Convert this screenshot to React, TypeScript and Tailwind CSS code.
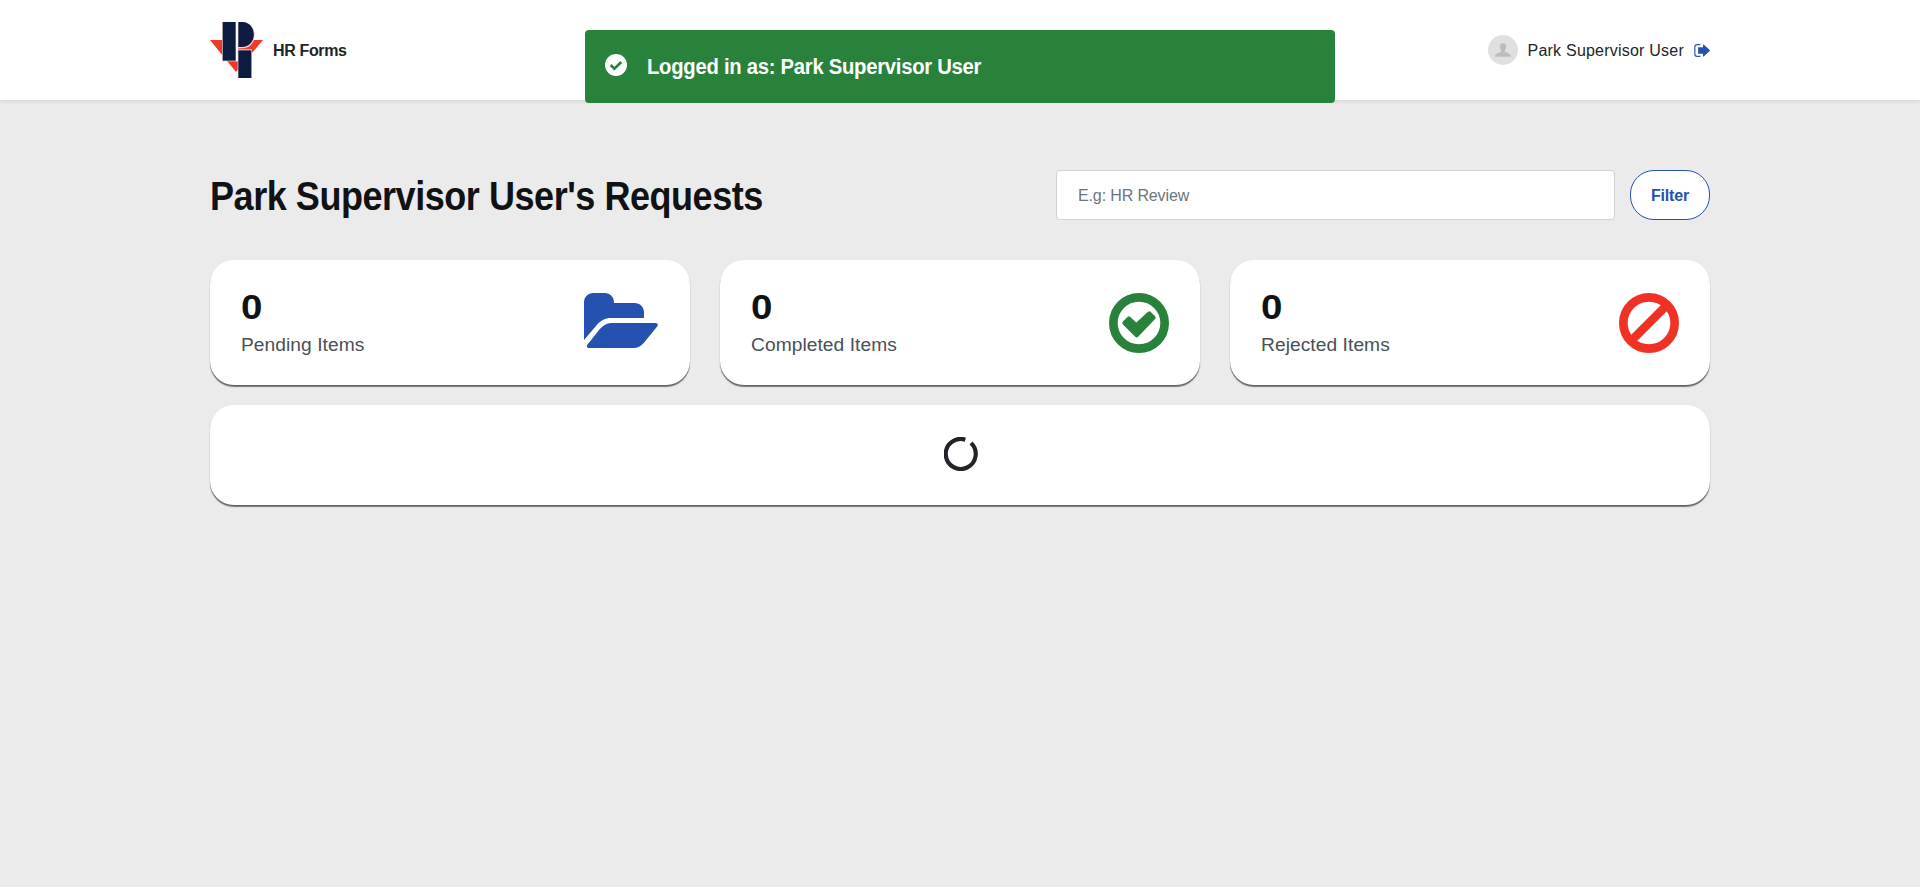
import React from "react";

function Logo() {
  return (
    <svg viewBox="0 0 159 168" className="h-14 w-[53px]" aria-hidden="true">
      <path d="M0 54H159L78 150Z" fill="#f03a28" />
      <path d="M36 0H79V118H36Z" fill="#f3d5d5" />
      <path d="M77 0H85V118H77Z" fill="#fff" />
      <path d="M83 0H99C146 2 146 76 99 79H83Z" fill="#f3d5d5" />
      <path d="M83 82H126V168H83Z" fill="#f3d5d5" />
      <path d="M38 0H77V116H38Z" fill="#0d1b40" />
      <path d="M85 0H97C143 1 143 74 97 75H85Z" fill="#0d1b40" />
      <path d="M85 85H124V168H85Z" fill="#0d1b40" />
    </svg>
  );
}

function FolderIcon() {
  return (
    <svg viewBox="0 0 222 165" className="h-[55px] w-[74px]" fill="#2552b0" aria-hidden="true">
      <path d="M0 141V28C0 12 12 0 28 0H62C78 0 90 12 90 28V30H152C168 30 180 42 180 58V75H80C64 75 50 83 41 93Z" />
      <path d="M82 90H215C221 90 223 95 220 100L180 149C171 159 160 165 148 165H15C9 165 7 160 10 155L47 109C57 97 68 90 82 90Z" />
    </svg>
  );
}

function CompletedIcon() {
  return (
    <svg viewBox="0 0 180 180" className="-mr-px size-15" aria-hidden="true">
      <circle cx="90" cy="90" r="77" fill="none" stroke="#28823c" strokeWidth="26" />
      <path d="M46 90L60 76L82 97L121 61L134 74L83 127Z" fill="#28823c" stroke="#28823c" strokeWidth="12" strokeLinejoin="round" />
    </svg>
  );
}

function RejectedIcon() {
  return (
    <svg viewBox="0 0 180 180" className="-mr-px size-15" fill="none" stroke="#f03224" strokeWidth="26" aria-hidden="true">
      <circle cx="90" cy="90" r="77" />
      <path d="M42 138L138 42" />
    </svg>
  );
}

const cardClass = "rounded-3xl bg-white shadow-[0_2px_1px_rgba(0,0,0,0.5),0_1px_1px_rgba(0,0,0,0.15)]";

function StatCard({ count, label, icon }: { count: number; label: string; icon: React.ReactNode }) {
  return (
    <div className={`${cardClass} flex h-[125px] items-start justify-between pr-8 pl-[31px] pt-[33px]`}>
      <div>
        <div className="-mt-px origin-left scale-x-[1.1] text-[35px] leading-[30px] font-bold text-[#101214]">{count}</div>
        <div className="mt-[11px] text-[19.2px] leading-6 tracking-[0.06px] text-[#495057]">{label}</div>
      </div>
      {icon}
    </div>
  );
}

export default function App() {
  return (
    <div className="min-h-screen bg-[#ebebeb] font-['Liberation_Sans',Arial,sans-serif] text-[#212529]">
      <header className="relative h-[100px] bg-white shadow-[0_2px_4px_rgba(0,0,0,0.08)]">
        <div className="mx-auto flex h-full w-[1500px] items-center justify-between">
          <div className="flex items-center">
            <Logo />
            <span className="ml-2.5 pt-0.5 text-base font-bold tracking-[-0.35px]">HR Forms</span>
          </div>
          <div className="flex items-center">
            <svg viewBox="0 0 90 90" className="size-[30px]" aria-hidden="true">
              <circle cx="45" cy="45" r="45" fill="#e0e0e0" />
              <path d="M45 25C53 25 56 31 54 38C53 43 50 45 50 49C51 53 69 54 69 65H21C21 54 39 53 40 49C40 45 37 43 36 38C34 31 37 25 45 25Z" fill="#bdbdbd" />
            </svg>
            <span className="ml-2.5 pt-0.5 text-base tracking-[0.22px]">Park Supervisor User</span>
            <svg viewBox="0 0 48 40" className="ml-2.5 h-[13px] w-4" aria-hidden="true">
              <path d="M19 2H9Q2 2 2 9V31Q2 38 9 38H19" fill="none" stroke="#2552b0" strokeWidth="3.5" />
              <path d="M12 10H27V3Q27 0 30 2L47 18Q49 20 47 22L30 38Q27 40 27 37V30H12Z" fill="#2552b0" />
            </svg>
          </div>
        </div>
        <div className="absolute top-[30px] left-1/2 flex h-[73px] w-[750px] -translate-x-1/2 items-center rounded bg-[#28823c] pl-5 text-white">
          <svg viewBox="0 0 66 66" className="mb-[3px] size-[22px]" aria-hidden="true">
            <circle cx="33" cy="33" r="33" fill="#fff" />
            <path d="M17 33L28 44L49 24" fill="none" stroke="#28823c" strokeWidth="8" />
          </svg>
          <span className="ml-[19.5px] origin-left scale-x-[0.905] text-[22.4px] font-bold whitespace-nowrap tracking-[-0.3px]">
            Logged in as: Park Supervisor User
          </span>
        </div>
      </header>

      <main className="mx-auto w-[1500px] pt-[70px]">
        <div className="flex h-[50px] items-center justify-between">
          <h1 className="w-[560px] origin-left scale-x-[0.9] pt-0.5 text-[40px] leading-[50px] font-bold whitespace-nowrap tracking-[-0.5px] text-[#101214]">
            Park Supervisor User's Requests
          </h1>
          <div className="flex gap-[15px]">
            <input
              type="text"
              placeholder="E.g: HR Review"
              className="h-[50px] w-[559px] rounded border border-[#ced4da] bg-white px-[21px] pt-0.5 text-base tracking-[-0.13px] placeholder:text-[#6c757d]"
            />
            <button className="h-[50px] w-20 rounded-3xl border border-[#2552b0] bg-white pt-0.5 text-base font-bold tracking-[-0.15px] text-[#2552b0]">
              Filter
            </button>
          </div>
        </div>
        <div className="mt-10 grid grid-cols-3 gap-[30px]">
          <StatCard count={0} label="Pending Items" icon={<FolderIcon />} />
          <StatCard count={0} label="Completed Items" icon={<CompletedIcon />} />
          <StatCard count={0} label="Rejected Items" icon={<RejectedIcon />} />
        </div>
        <div className={`${cardClass} mt-5 flex h-[100px] items-center justify-center pb-[3px] pl-[1.4px]`}>
          <svg viewBox="0 0 102 102" className="size-[34px]" aria-hidden="true">
            <path d="M64 8A45 45 0 1 0 81 18" fill="none" stroke="#212529" strokeWidth="12.5" />
          </svg>
        </div>
      </main>
    </div>
  );
}
